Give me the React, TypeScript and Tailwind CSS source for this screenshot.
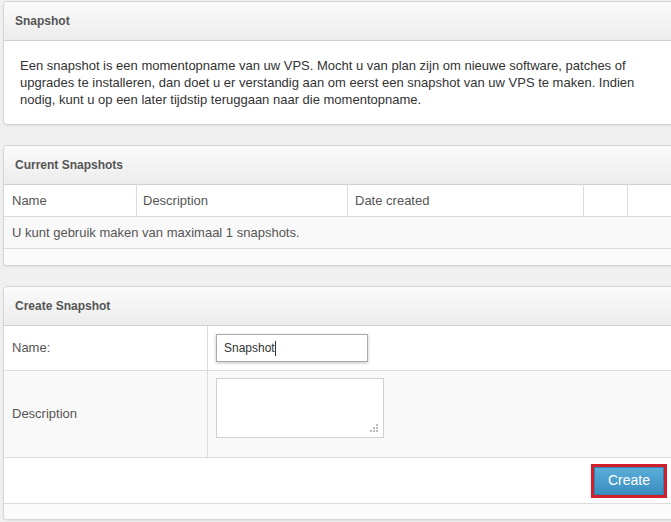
import React from "react";

function PanelHeader({ title }: { title: string }) {
  return (
    <div className="h-[39px] flex items-center px-[11px] bg-gradient-to-b from-[#fbfbfb] to-[#ececec] border-b border-[#d2d2d2] rounded-t-[4px]">
      <span className="text-[12px] font-bold text-[#555]">{title}</span>
    </div>
  );
}

export default function App() {
  return (
    <div
      className="w-[671px] h-[522px] bg-[#f0f0f0] overflow-hidden pt-[1px] pl-[3px] text-[#333]"
      style={{ fontFamily: '"Liberation Sans", Arial, sans-serif' }}
    >
      {/* Panel 1 */}
      <div className="w-[675px] bg-white border border-[#d6d6d6] rounded-[4px] shadow-[0_1px_2px_rgba(0,0,0,0.08)]">
        <PanelHeader title="Snapshot" />
        <div className="px-[16px] pt-[16px] pb-[16px] text-[13px] leading-[17px] text-[#333]">
          Een snapshot is een momentopname van uw VPS. Mocht u van plan zijn om nieuwe software, patches of
          upgrades te installeren, dan doet u er verstandig aan om eerst een snapshot van uw VPS te maken. Indien
          nodig, kunt u op een later tijdstip teruggaan naar die momentopname.
        </div>
      </div>

      {/* Panel 2 */}
      <div className="mt-[20px] w-[675px] bg-white border border-[#d6d6d6] rounded-[4px] shadow-[0_1px_2px_rgba(0,0,0,0.08)]">
        <PanelHeader title="Current Snapshots" />
        <div className="grid grid-cols-[133px_211px_236px_44px_1fr] h-[32px] border-b border-[#dcdcdc] text-[13px] text-[#555]">
          <div className="flex items-center px-[8px] border-r border-[#dcdcdc]">Name</div>
          <div className="flex items-center px-[6px] border-r border-[#dcdcdc]">Description</div>
          <div className="flex items-center px-[7px] border-r border-[#dcdcdc]">Date created</div>
          <div className="border-r border-[#dcdcdc]"></div>
          <div></div>
        </div>
        <div className="h-[32px] flex items-center px-[8px] bg-[#f9f9f9] border-b border-[#dcdcdc] text-[13px] text-[#555]">
          U kunt gebruik maken van maximaal 1 snapshots.
        </div>
        <div className="h-[16px] bg-[#fbfbfb] rounded-b-[4px]"></div>
      </div>

      {/* Panel 3 */}
      <div className="mt-[20px] w-[675px] bg-white border border-[#d6d6d6] rounded-[4px] shadow-[0_1px_2px_rgba(0,0,0,0.08)]">
        <PanelHeader title="Create Snapshot" />
        <div className="grid grid-cols-[204px_1fr] h-[45px] border-b border-[#dcdcdc] text-[13px] text-[#555]">
          <div className="flex items-center px-[8px] border-r border-[#dcdcdc]">Name:</div>
          <div className="flex items-center px-[8px]">
            <div className="w-[152px] h-[28px] border border-[#a9a9a9] bg-white shadow-[0_1px_3px_rgba(0,0,0,0.25)] flex items-center px-[7px] text-[12px] text-[#333]">
              Snapshot<span className="inline-block w-[1px] h-[15px] bg-[#333]"></span>
            </div>
          </div>
        </div>
        <div className="grid grid-cols-[204px_1fr] h-[87px] border-b border-[#dcdcdc] bg-[#f9f9f9] text-[13px] text-[#555]">
          <div className="flex items-center px-[8px] border-r border-[#dcdcdc]">Description</div>
          <div className="pt-[7px] px-[8px]">
            <div className="relative w-[168px] h-[60px] border border-[#d0d0d0] bg-white">
              <svg className="absolute right-[4px] bottom-[4px]" width="10" height="10" viewBox="0 0 10 10">
                <rect x="7" y="1" width="2" height="2" fill="#bbb" />
                <rect x="4" y="4" width="2" height="2" fill="#bbb" />
                <rect x="7" y="4" width="2" height="2" fill="#bbb" />
                <rect x="1" y="7" width="2" height="2" fill="#bbb" />
                <rect x="4" y="7" width="2" height="2" fill="#bbb" />
                <rect x="7" y="7" width="2" height="2" fill="#bbb" />
              </svg>
            </div>
          </div>
        </div>
        <div className="h-[46px] border-b border-[#dcdcdc] flex items-center justify-end pr-[10px]">
          <div className="border-[3px] border-[#d11f2c] p-0">
            <button className="w-[70px] h-[28px] bg-gradient-to-b from-[#5aaed9] to-[#3a8dbf] text-white text-[14px] border border-[#3580ae]">
              Create
            </button>
          </div>
        </div>
        <div className="h-[15px] bg-[#fbfbfb] rounded-b-[4px]"></div>
      </div>
    </div>
  );
}
